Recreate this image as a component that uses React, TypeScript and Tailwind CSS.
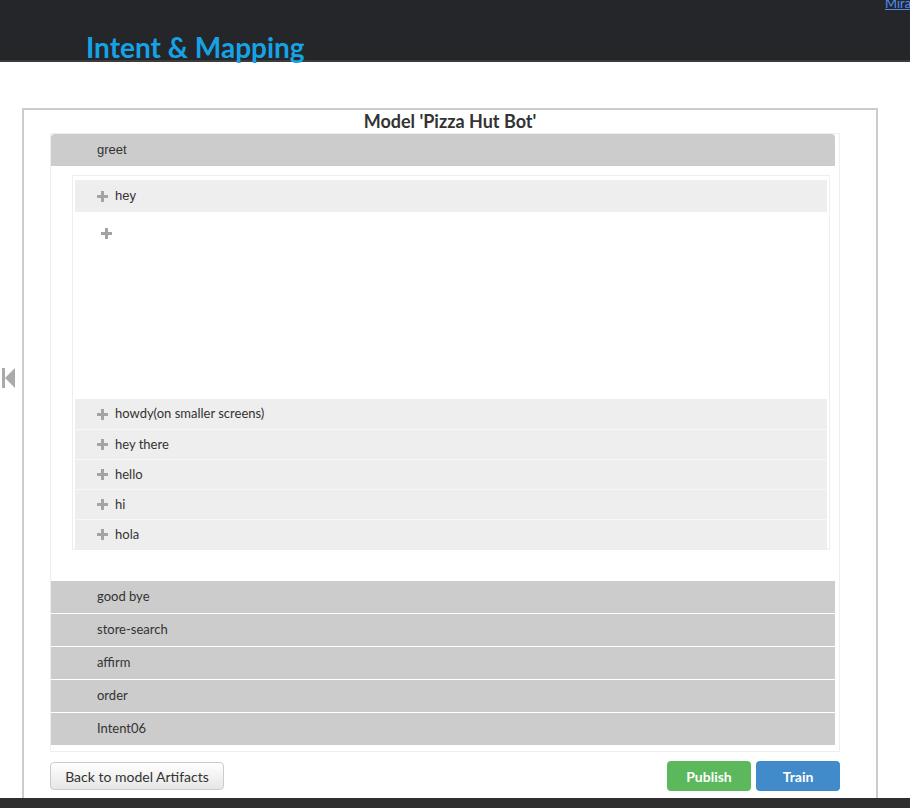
import React from 'react';

const Plus = () => (
  <svg width="11" height="11" viewBox="0 0 11 11" className="shrink-0">
    <rect x="4" y="0" width="3" height="11" fill="#a3a3a3" />
    <rect x="0" y="4" width="11" height="3" fill="#a3a3a3" />
  </svg>
);

const utterances = ['howdy(on smaller screens)', 'hey there', 'hello', 'hi', 'hola'];
const intents = ['good bye', 'store-search', 'affirm', 'order', 'Intent06'];

const App: React.FC = () => {
  return (
    <div className="relative h-[808px] w-[910px] overflow-hidden bg-white text-[#333] font-['Lato','Liberation_Sans',sans-serif]">
      {/* top bar */}
      <div className="h-[62px] bg-[#252629] flex items-end pl-[86px] border-b-2 border-[#3a3b3d]">
        <h1 className="text-[28px] leading-[36px] font-bold text-[#16a3e6] -mb-[5px]">Intent &amp; Mapping</h1>
      </div>
      <a href="#" className="absolute right-0 -top-[6px] w-[25px] overflow-hidden text-[13px] text-[#4f8ef7] underline">Mira</a>

      {/* collapse arrow */}
      <svg className="absolute left-[2px] top-[368px]" width="14" height="20" viewBox="0 0 14 20">
        <rect x="0" y="0" width="3" height="20" fill="#aaa" />
        <polygon points="3,10 13,0 13,20" fill="#aaa" />
      </svg>

      <div className="ml-[22px] mt-[46px] w-[856px] h-[720px] border-2 border-[#ccc]">
        <h2 className="text-center text-[18px] leading-[23px] font-bold text-[#333]">Model 'Pizza Hut Bot'</h2>

        <div className="ml-[26px] w-[790px] border border-[#eee] pr-[4px] pb-[6px]">
          <div className="h-[32px] bg-[#ccc] rounded-t-[4px] flex items-center pl-[46px] text-[13px] font-['Liberation_Sans',sans-serif]">
            greet
          </div>

          <div className="mt-[9px] ml-[21px] w-[758px] h-[375px] border border-[#eee] pt-[4px] px-[2px] flex flex-col">
            <div className="h-[32px] bg-[#eee] flex items-center gap-[7px] pl-[22px] text-[13px] font-['Liberation_Sans',sans-serif]">
              <Plus />
              hey
            </div>
            <div className="flex-1 pl-[26px] pt-[16px]">
              <Plus />
            </div>
            <div className="flex flex-col">
              {utterances.map((u, i) => (
                <div
                  key={u}
                  className={`h-[30px] bg-[#eee] flex items-center gap-[7px] pl-[22px] text-[13px] ${i > 0 ? 'border-t border-[#f7f7f7]' : ''}`}
                >
                  <Plus />
                  {u}
                </div>
              ))}
            </div>
          </div>

          <div className="mt-[31px] flex flex-col">
            {intents.map((n, i) => (
              <div
                key={n}
                className={`h-[32px] bg-[#ccc] flex items-center pl-[46px] text-[13px] ${i > 0 ? 'mt-[1px]' : ''}`}
              >
                {n}
              </div>
            ))}
          </div>
        </div>

        <div className="ml-[26px] w-[790px] mt-[9px] flex items-start justify-between">
          <button className="mt-[1px] h-[28px] w-[174px] rounded-[4px] border border-[#ccc] bg-gradient-to-b from-white to-[#e6e6e6] text-[14px] text-[#333]">
            Back to model Artifacts
          </button>
          <div className="flex gap-[5px]">
            <button className="h-[30px] w-[84px] rounded-[4px] bg-[#5cb85c] text-white text-[14px] font-bold">Publish</button>
            <button className="h-[30px] w-[84px] rounded-[4px] bg-[#428bca] text-white text-[14px] font-bold">Train</button>
          </div>
        </div>
      </div>

      <div className="absolute left-0 bottom-0 w-full h-[10px] bg-[#2f2f2f]" />
    </div>
  );
};

export default App;
